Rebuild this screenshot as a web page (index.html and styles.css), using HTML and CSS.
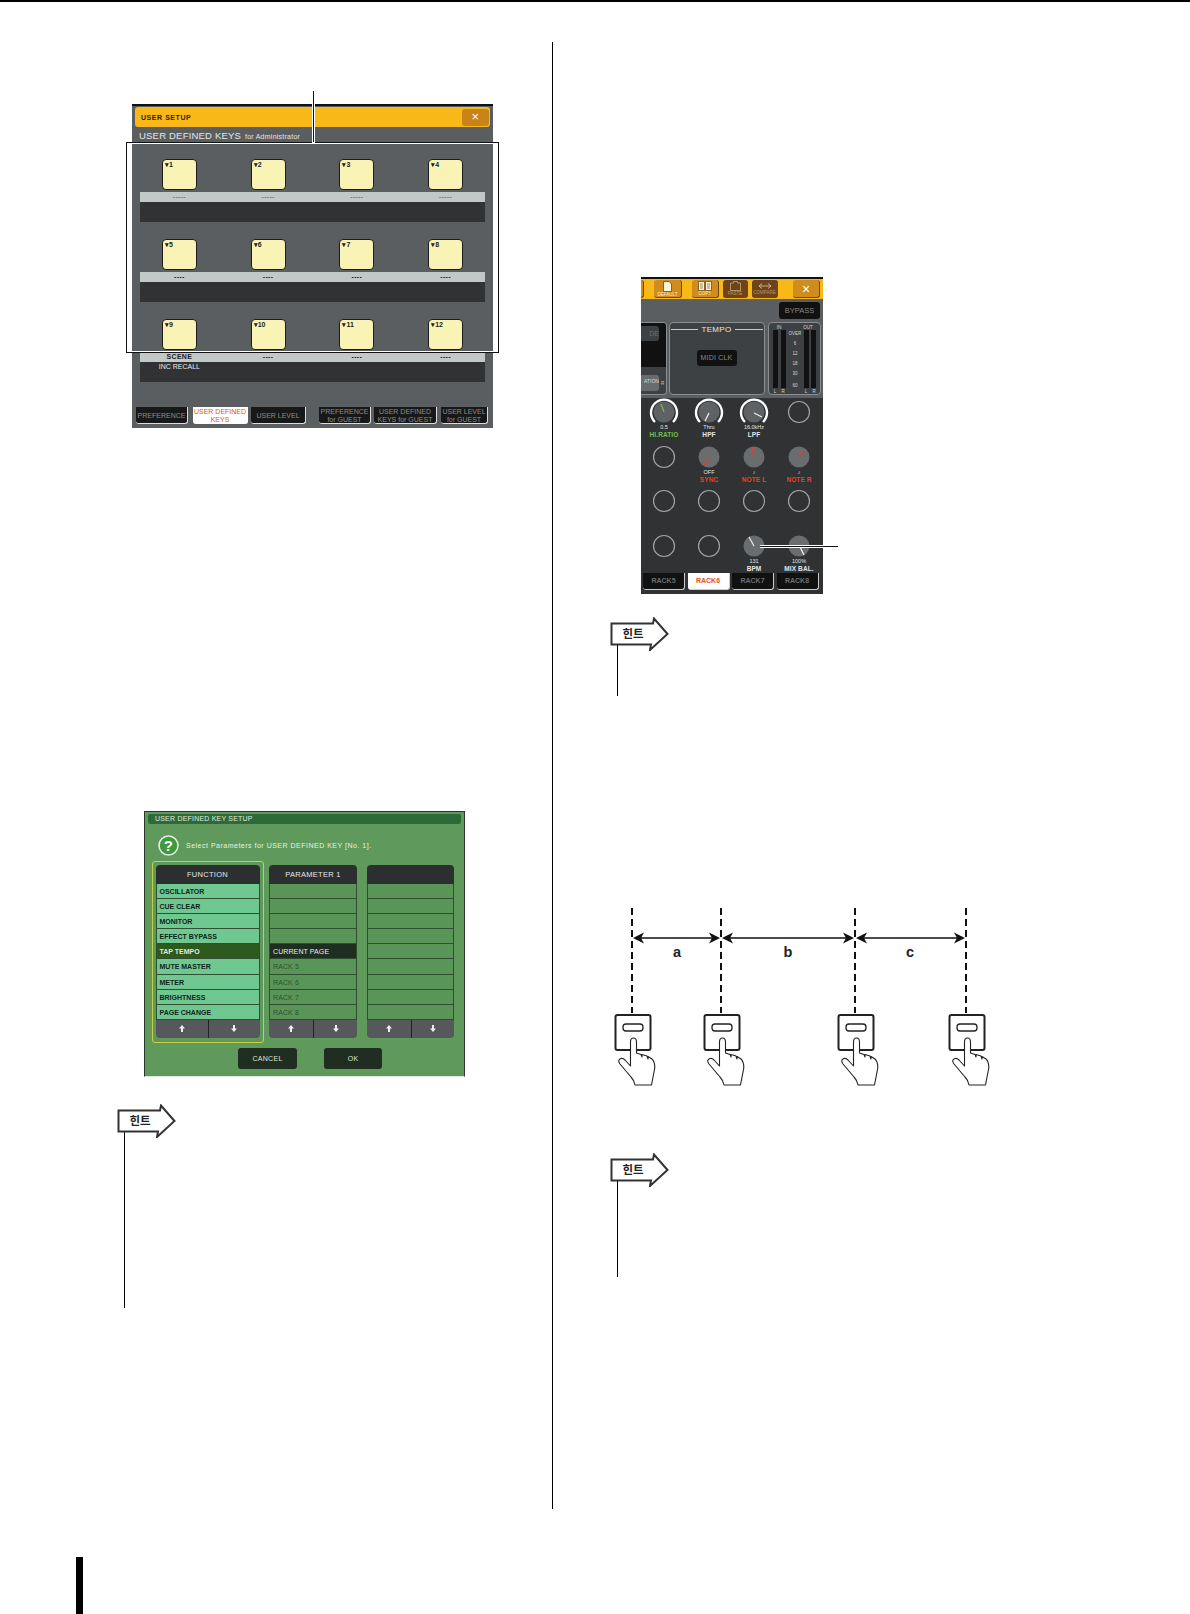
FILE: index.html
```html
<!DOCTYPE html>
<html lang="ko">
<head>
    <meta charset="UTF-8">
    <title>USER DEFINED KEYS</title>
    <link rel="stylesheet" href="styles.css">
</head>
<body>
<div class="page">
    <div class="columns">
        <div class="col-left">

            <!-- USER SETUP window -->
            <div class="setup">
                <div class="setup-title">
                    <span>USER SETUP</span>
                    <span class="setup-close">×</span>
                </div>
                <div class="setup-head">USER DEFINED KEYS <small>for Administrator</small></div>

                <div class="setup-row">
                    <div class="key-grid">
                        <div class="key">▾1</div><div class="key">▾2</div><div class="key">▾3</div><div class="key">▾4</div>
                    </div>
                    <div class="strip strip-faint">
                        <div class="strip-labels"><span>-----</span><span>-----</span><span>-----</span><span>-----</span></div>
                    </div>
                    <div class="strip-dark"></div>
                </div>
                <div class="setup-row">
                    <div class="key-grid">
                        <div class="key">▾5</div><div class="key">▾6</div><div class="key">▾7</div><div class="key">▾8</div>
                    </div>
                    <div class="strip">
                        <div class="strip-labels"><span>----</span><span>----</span><span>----</span><span>----</span></div>
                    </div>
                    <div class="strip-dark"></div>
                </div>
                <div class="setup-row">
                    <div class="key-grid">
                        <div class="key">▾9</div><div class="key">▾10</div><div class="key">▾11</div><div class="key">▾12</div>
                    </div>
                    <div class="strip">
                        <div class="strip-labels"><span>SCENE</span><span>----</span><span>----</span><span>----</span></div>
                    </div>
                    <div class="strip-dark">
                        <div class="strip-labels strip-labels-light"><span>INC RECALL</span></div>
                    </div>
                </div>

                <div class="setup-tabs">
                    <div class="tab tab-pref">PREFERENCE</div>
                    <div class="tab tab-keys tab-on">USER DEFINED<br>KEYS</div>
                    <div class="tab tab-level">USER LEVEL</div>
                    <div class="tab tab-guest1">PREFERENCE<br>for GUEST</div>
                    <div class="tab tab-guest2">USER DEFINED<br>KEYS for GUEST</div>
                    <div class="tab tab-guest3">USER LEVEL<br>for GUEST</div>
                </div>

                <div class="setup-frame"></div>
                <div class="setup-leader"></div>
            </div>

            <!-- USER DEFINED KEY SETUP window -->
            <div class="keysetup">
                <div class="keysetup-title">USER DEFINED KEY SETUP</div>
                <div class="keysetup-ask">
                    <svg class="ask-icon" width="21" height="21" viewBox="0 0 21 21">
                        <circle cx="10.5" cy="10.5" r="9.5" fill="#3f9a3f" stroke="#e4efe0" stroke-width="1.6"/>
                        <text x="10.5" y="16" text-anchor="middle" class="ask-mark">?</text>
                    </svg>
                    <span>Select Parameters for USER DEFINED KEY [No. 1].</span>
                </div>
                <div class="lists">
                    <div class="list-focus">
                        <div class="list list-fn">
                            <div class="list-head">FUNCTION</div>
                            <div class="list-row">OSCILLATOR</div>
                            <div class="list-row">CUE CLEAR</div>
                            <div class="list-row">MONITOR</div>
                            <div class="list-row">EFFECT BYPASS</div>
                            <div class="list-row list-row-on">TAP TEMPO</div>
                            <div class="list-row">MUTE MASTER</div>
                            <div class="list-row">METER</div>
                            <div class="list-row">BRIGHTNESS</div>
                            <div class="list-row">PAGE CHANGE</div>
                            <div class="list-arrows">
                                <div><svg width="6" height="7" viewBox="0 0 6 7"><path d="M3 0L6 3.5H4V7H2V3.5H0Z"/></svg></div>
                                <div><svg width="6" height="7" viewBox="0 0 6 7"><path d="M3 7L6 3.5H4V0H2V3.5H0Z"/></svg></div>
                            </div>
                        </div>
                    </div>
                    <div class="list list-param">
                        <div class="list-head">PARAMETER 1</div>
                        <div class="list-row"></div>
                        <div class="list-row"></div>
                        <div class="list-row"></div>
                        <div class="list-row"></div>
                        <div class="list-row list-row-cur">CURRENT PAGE</div>
                        <div class="list-row">RACK 5</div>
                        <div class="list-row">RACK 6</div>
                        <div class="list-row">RACK 7</div>
                        <div class="list-row">RACK 8</div>
                        <div class="list-arrows">
                            <div><svg width="6" height="7" viewBox="0 0 6 7"><path d="M3 0L6 3.5H4V7H2V3.5H0Z"/></svg></div>
                            <div><svg width="6" height="7" viewBox="0 0 6 7"><path d="M3 7L6 3.5H4V0H2V3.5H0Z"/></svg></div>
                        </div>
                    </div>
                    <div class="list list-empty">
                        <div class="list-head"></div>
                        <div class="list-row"></div>
                        <div class="list-row"></div>
                        <div class="list-row"></div>
                        <div class="list-row"></div>
                        <div class="list-row"></div>
                        <div class="list-row"></div>
                        <div class="list-row"></div>
                        <div class="list-row"></div>
                        <div class="list-row"></div>
                        <div class="list-arrows">
                            <div><svg width="6" height="7" viewBox="0 0 6 7"><path d="M3 0L6 3.5H4V7H2V3.5H0Z"/></svg></div>
                            <div><svg width="6" height="7" viewBox="0 0 6 7"><path d="M3 7L6 3.5H4V0H2V3.5H0Z"/></svg></div>
                        </div>
                    </div>
                </div>
                <div class="keysetup-btns">
                    <div class="dlg-btn dlg-cancel">CANCEL</div>
                    <div class="dlg-btn dlg-ok">OK</div>
                </div>
            </div>

            <div class="hint hint-a">
                <svg class="hint-arrow" width="60" height="34" viewBox="0 0 60 34">
                    <path d="M1.5 6.5H43L44 1.5L57.5 17L40 33L41 27.5H1.5Z" fill="#fff" stroke="#333" stroke-width="2"/>
                    <text x="23" y="21" text-anchor="middle" class="hint-text">힌트</text>
                </svg>
                <div class="hint-line hint-line-a"></div>
            </div>
        </div>

        <div class="col-right">

            <!-- rack window -->
            <div class="rack">
                <div class="rack-bar">
                    <div class="bar-btn bar-stub"></div>
                    <div class="bar-btn bar-default">
                        <svg width="9" height="11" viewBox="0 0 9 11"><path d="M.5.5H6L8.5 3V10.5H.5Z" fill="#fff4d8" stroke="#5c3a08" stroke-width=".7"/></svg>
                        <span>DEFAULT</span>
                    </div>
                    <div class="bar-btn bar-copy">
                        <svg width="14" height="10" viewBox="0 0 14 10"><path d="M.5.5H6.5V9.5H.5ZM7.5.5H13.5V9.5H7.5Z" fill="#fff4d8" stroke="#5c3a08" stroke-width=".7"/><path d="M2 3H5M2 5H5M2 7H5M9 3H12M9 5H12M9 7H12" stroke="#5c3a08" stroke-width=".6"/></svg>
                        <span>COPY</span>
                    </div>
                    <div class="bar-btn bar-paste bar-off">
                        <svg width="11" height="10" viewBox="0 0 11 10"><path d="M.5 2H3.5V.5H7.5V2H10.5V9.5H.5Z" fill="none" stroke="#c9a878" stroke-width=".8"/></svg>
                        <span>PASTE</span>
                    </div>
                    <div class="bar-btn bar-compare bar-off">
                        <svg width="14" height="8" viewBox="0 0 14 8"><path d="M1 4H13M1 4L4 1.5M1 4L4 6.5M13 4L10 1.5M13 4L10 6.5" fill="none" stroke="#e0c8a0" stroke-width=".8"/></svg>
                        <span>COMPARE</span>
                    </div>
                    <div class="bar-btn bar-close">×</div>
                </div>

                <div class="rack-top">
                    <div class="bypass-line"><div class="bypass">BYPASS</div></div>
                    <div class="rack-panels">
                        <div class="panel panel-stub">
                            <div class="stub-black"><div class="stub-btn">DE</div></div>
                            <div class="stub-lower"><div class="stub-btn2">ATION</div><span>R</span></div>
                        </div>
                        <div class="panel panel-tempo">
                            <div class="tempo-title"><span>TEMPO</span></div>
                            <div class="midi-clk">MIDI CLK</div>
                        </div>
                        <div class="panel panel-meter">
                            <svg width="51" height="71" viewBox="0 0 51 71">
                                <rect x="4" y="7" width="5" height="58" fill="#111"/>
                                <rect x="12" y="7" width="5" height="58" fill="#111"/>
                                <rect x="35" y="7" width="5" height="58" fill="#111"/>
                                <rect x="42" y="7" width="5" height="58" fill="#111"/>
                                <g class="meter-text" text-anchor="middle">
                                    <text x="10" y="6">IN</text>
                                    <text x="39" y="6">OUT</text>
                                    <text x="26" y="12">OVER</text>
                                    <text x="26" y="22">6</text>
                                    <text x="26" y="32">12</text>
                                    <text x="26" y="42">18</text>
                                    <text x="26" y="52">30</text>
                                    <text x="26" y="64">60</text>
                                    <text x="6" y="70">L</text>
                                    <text x="14" y="70">R</text>
                                    <text x="37" y="70">L</text>
                                    <text x="45" y="70">R</text>
                                </g>
                            </svg>
                        </div>
                    </div>
                </div>

                <div class="knobs">
                    <div class="knob-cell">
                        <svg class="knob" width="30" height="28" viewBox="-15 -14 30 28">
                            <path d="M-9 10A13 13 0 1 1 9 10" fill="none" stroke="#fff" stroke-width="2.4"/>
                            <circle r="10.5" fill="#5e6264"/>
                            <path d="M-3-8L0 0" stroke="#6fc04a" stroke-width="1.2"/>
                        </svg>
                        <div class="knob-val">0.5</div><div class="knob-name name-green">HI.RATIO</div>
                    </div>
                    <div class="knob-cell">
                        <svg class="knob" width="30" height="28" viewBox="-15 -14 30 28">
                            <path d="M-9 10A13 13 0 1 1 9 10" fill="none" stroke="#fff" stroke-width="2.4"/>
                            <circle r="10.5" fill="#5e6264"/>
                            <path d="M-4 9L0 1" stroke="#eee" stroke-width="1.2"/>
                        </svg>
                        <div class="knob-val">Thru</div><div class="knob-name">HPF</div>
                    </div>
                    <div class="knob-cell">
                        <svg class="knob" width="30" height="28" viewBox="-15 -14 30 28">
                            <path d="M-9 10A13 13 0 1 1 9 10" fill="none" stroke="#fff" stroke-width="2.4"/>
                            <circle r="10.5" fill="#5e6264"/>
                            <path d="M8 5L0 1" stroke="#eee" stroke-width="1.2"/>
                        </svg>
                        <div class="knob-val">16.0kHz</div><div class="knob-name">LPF</div>
                    </div>
                    <div class="knob-cell">
                        <svg class="knob" width="30" height="28" viewBox="-15 -14 30 28"><circle r="10.5" class="knob-empty"/></svg>
                    </div>

                    <div class="knob-cell">
                        <svg class="knob" width="30" height="28" viewBox="-15 -14 30 28"><circle r="10.5" class="knob-empty"/></svg>
                    </div>
                    <div class="knob-cell">
                        <svg class="knob" width="30" height="28" viewBox="-15 -14 30 28">
                            <circle r="10.5" fill="#696d6f"/><path d="M-5 8L0 0" stroke="#e84020" stroke-width="1.2"/>
                        </svg>
                        <div class="knob-val">OFF</div><div class="knob-name name-red">SYNC</div>
                    </div>
                    <div class="knob-cell">
                        <svg class="knob" width="30" height="28" viewBox="-15 -14 30 28">
                            <circle r="10.5" fill="#696d6f"/><path d="M-2-10L0 1" stroke="#e84020" stroke-width="1.2"/>
                        </svg>
                        <div class="knob-val">♪</div><div class="knob-name name-red">NOTE L</div>
                    </div>
                    <div class="knob-cell">
                        <svg class="knob" width="30" height="28" viewBox="-15 -14 30 28">
                            <circle r="10.5" fill="#696d6f"/><path d="M5-8L0 0" stroke="#e84020" stroke-width="1.2"/>
                        </svg>
                        <div class="knob-val">♪</div><div class="knob-name name-red">NOTE R</div>
                    </div>

                    <div class="knob-cell">
                        <svg class="knob" width="30" height="28" viewBox="-15 -14 30 28"><circle r="10.5" class="knob-empty"/></svg>
                    </div>
                    <div class="knob-cell">
                        <svg class="knob" width="30" height="28" viewBox="-15 -14 30 28"><circle r="10.5" class="knob-empty"/></svg>
                    </div>
                    <div class="knob-cell">
                        <svg class="knob" width="30" height="28" viewBox="-15 -14 30 28"><circle r="10.5" class="knob-empty"/></svg>
                    </div>
                    <div class="knob-cell">
                        <svg class="knob" width="30" height="28" viewBox="-15 -14 30 28"><circle r="10.5" class="knob-empty"/></svg>
                    </div>

                    <div class="knob-cell">
                        <svg class="knob" width="30" height="28" viewBox="-15 -14 30 28"><circle r="10.5" class="knob-empty"/></svg>
                    </div>
                    <div class="knob-cell">
                        <svg class="knob" width="30" height="28" viewBox="-15 -14 30 28"><circle r="10.5" class="knob-empty"/></svg>
                    </div>
                    <div class="knob-cell">
                        <svg class="knob" width="30" height="28" viewBox="-15 -14 30 28">
                            <circle r="10.5" fill="#696d6f"/><path d="M-5-9L0 0" stroke="#eee" stroke-width="1.2"/>
                        </svg>
                        <div class="knob-val">131</div><div class="knob-name">BPM</div>
                    </div>
                    <div class="knob-cell">
                        <svg class="knob" width="30" height="28" viewBox="-15 -14 30 28">
                            <circle r="10.5" fill="#696d6f"/><path d="M1 1L5 9" stroke="#eee" stroke-width="1.2"/>
                        </svg>
                        <div class="knob-val">100%</div><div class="knob-name">MIX BAL.</div>
                    </div>
                </div>

                <div class="rack-tabs">
                    <div class="rtab">RACK5</div>
                    <div class="rtab rtab-on">RACK6</div>
                    <div class="rtab">RACK7</div>
                    <div class="rtab">RACK8</div>
                </div>
                <div class="rack-leader"></div>
            </div>

            <div class="hint hint-b">
                <svg class="hint-arrow" width="60" height="34" viewBox="0 0 60 34">
                    <path d="M1.5 6.5H43L44 1.5L57.5 17L40 33L41 27.5H1.5Z" fill="#fff" stroke="#333" stroke-width="2"/>
                    <text x="23" y="21" text-anchor="middle" class="hint-text">힌트</text>
                </svg>
                <div class="hint-line hint-line-b"></div>
            </div>

            <!-- tap tempo diagram -->
            <svg class="taps" width="400" height="195" viewBox="0 0 400 195">
                <defs>
                    <g id="tap">
                        <path d="M0 8V113" stroke="#111" stroke-width="2" stroke-dasharray="7 4" fill="none"/>
                        <rect x="-16.5" y="115" width="35" height="35" rx="2" fill="#fff" stroke="#222" stroke-width="2"/>
                        <rect x="-9" y="124" width="20" height="7" rx="3" fill="#fff" stroke="#222" stroke-width="1.3"/>
                        <path d="M-1.5 166V142Q-1.5 138 1.5 138Q4.5 138 4.5 142V153L9 154.5L10 157L10 154.5L15 156L16 159L16 156.5L20 159Q23 162 22.8 168L19.5 185H3Q2 180-1 177L-12 164Q-15 160-11 158.5Q-9 158-7 160Z" fill="#fff" stroke="#222" stroke-width="1.1" stroke-linejoin="round"/>
                    </g>
                    <g id="head-l"><path d="M0 0L11-5.5L8 0L11 5.5Z" fill="#111"/></g>
                    <g id="head-r"><path d="M0 0L-11-5.5L-8 0L-11 5.5Z" fill="#111"/></g>
                </defs>
                <use href="#tap" x="32"/>
                <use href="#tap" x="121"/>
                <use href="#tap" x="255"/>
                <use href="#tap" x="366"/>
                <path d="M36 38H118M125 38H252M259 38H363" stroke="#111" stroke-width="1.6" fill="none"/>
                <use href="#head-l" x="33" y="38"/>
                <use href="#head-r" x="120" y="38"/>
                <use href="#head-l" x="122" y="38"/>
                <use href="#head-r" x="254" y="38"/>
                <use href="#head-l" x="256" y="38"/>
                <use href="#head-r" x="365" y="38"/>
                <text x="77" y="57" text-anchor="middle" class="taps-label">a</text>
                <text x="188" y="57" text-anchor="middle" class="taps-label">b</text>
                <text x="310" y="57" text-anchor="middle" class="taps-label">c</text>
            </svg>

            <div class="hint hint-c">
                <svg class="hint-arrow" width="60" height="34" viewBox="0 0 60 34">
                    <path d="M1.5 6.5H43L44 1.5L57.5 17L40 33L41 27.5H1.5Z" fill="#fff" stroke="#333" stroke-width="2"/>
                    <text x="23" y="21" text-anchor="middle" class="hint-text">힌트</text>
                </svg>
                <div class="hint-line hint-line-c"></div>
            </div>
        </div>
    </div>
    <div class="thumb-bar"></div>
</div>
</body>
</html>
```

FILE: styles.css
```css
html, body {
    margin: 0;
    padding: 0;
    background: #fff;
}
.page {
    width: 1190px;
    height: 1614px;
    overflow: hidden;
    border-top: 2px solid #000;
    box-sizing: border-box;
    padding-top: 40px;
    font-family: "Liberation Sans", Arial, sans-serif;
}
.columns {
    display: flex;
    height: 1467px;
}
.col-left {
    width: 552px;
    border-right: 1px solid #000;
    flex: none;
}
.col-right {
    flex: 1;
}
.thumb-bar {
    width: 7px;
    height: 57px;
    margin: 48px 0 0 76px;
    background: #000;
}

/* USER SETUP window */
.setup {
    position: relative;
    width: 361px;
    height: 324px;
    box-sizing: border-box;
    margin: 62px 0 0 132px;
    border-top: 2px solid #111;
    background: #5a5e60;
    padding-top: 1px;
}
.setup-title {
    display: flex;
    align-items: center;
    justify-content: space-between;
    height: 20px;
    margin: 0 3px;
    padding: 0 1px 0 6px;
    background: #f8b818;
    border-radius: 3px;
    color: #2a2008;
    font-size: 7px;
    font-weight: bold;
    letter-spacing: .55px;
}
.setup-close {
    width: 27px;
    height: 17px;
    line-height: 16px;
    text-align: center;
    background: #c98418;
    border-radius: 3px;
    color: #fff;
    font-size: 13px;
    font-weight: normal;
}
.setup-head {
    height: 15px;
    padding-left: 7px;
    margin-bottom: 17px;
    color: #e4e6e6;
    font-size: 9.5px;
    line-height: 18px;
    letter-spacing: .2px;
    white-space: nowrap;
}
.setup-head small {
    font-size: 7px;
    letter-spacing: .25px;
    margin-left: 1px;
}
.setup-row {
    margin: 0 3px 17px;
}
.key-grid {
    display: grid;
    grid-template-columns: repeat(4, 88.75px);
    justify-items: center;
}
.key {
    width: 35px;
    height: 31px;
    box-sizing: border-box;
    padding: 1px 0 0 2px;
    background: #f9f3b6;
    border: 1.5px solid #1c1c1c;
    border-radius: 4px;
    color: #222;
    font-size: 7px;
    font-weight: bold;
    line-height: 8px;
}
.strip {
    height: 10px;
    margin: 2px 5px 0;
    background: #c2c8c8;
    color: #222;
}
.strip-faint {
    color: #777;
}
.strip-labels {
    display: grid;
    grid-template-columns: repeat(4, 88.75px);
    justify-items: center;
    margin-left: -5px;
    font-size: 7px;
    font-weight: bold;
    line-height: 10px;
    letter-spacing: .3px;
}
.strip-labels-light {
    color: #e8e8e8;
    font-weight: normal;
    letter-spacing: 0;
    white-space: nowrap;
}
.strip-dark {
    height: 20px;
    margin: 0 5px;
    background: #303234;
}
.setup-tabs {
    display: flex;
    height: 17px;
    margin: 25px 0 0 4px;
}
.tab {
    box-sizing: border-box;
    height: 17px;
    padding-top: 1px;
    background: #181818;
    border-right: 1px solid #ddd;
    border-bottom: 1px solid #ddd;
    border-radius: 0 0 3px 3px;
    color: #8a8e90;
    font-size: 7px;
    line-height: 7.5px;
    text-align: center;
    white-space: nowrap;
    overflow: hidden;
}
.tab-pref, .tab-level {
    line-height: 15px;
}
.tab-pref { width: 52px; }
.tab-keys { width: 55px; margin-left: 5px; }
.tab-level { width: 55px; margin-left: 3px; }
.tab-guest1 { width: 52px; margin-left: 13px; }
.tab-guest2 { width: 63px; margin-left: 3px; }
.tab-guest3 { width: 47px; margin-left: 4px; }
.tab-on {
    background: #fff;
    border-color: #fff;
    color: #e85020;
}
.setup-frame {
    position: absolute;
    left: -6px;
    top: 36px;
    width: 373px;
    height: 211px;
    box-sizing: border-box;
    border: 1px solid #111;
    box-shadow: inset 0 0 0 1px #fff;
}
.setup-leader {
    position: absolute;
    left: 181px;
    top: -15px;
    width: 1px;
    height: 51px;
    background: #111;
    box-shadow: 0 0 0 1px #fff;
}

/* USER DEFINED KEY SETUP window */
.keysetup {
    width: 321px;
    height: 266px;
    box-sizing: border-box;
    margin: 383px 0 0 144px;
    padding: 2px 3px 0;
    background: #5f9a5c;
    border: 1px solid #2a3a2a;
    border-bottom-color: #dfe8dc;
}
.keysetup-title {
    height: 10px;
    padding-left: 7px;
    background: #2d6a3a;
    border-radius: 2px;
    color: #e0e8dc;
    font-size: 7px;
    line-height: 10px;
    letter-spacing: .2px;
}
.keysetup-ask {
    display: flex;
    align-items: center;
    height: 21px;
    margin: 11px 0 5px 10px;
    color: #e8f0e0;
    font-size: 7px;
    letter-spacing: .5px;
}
.ask-icon {
    margin-right: 7px;
}
.ask-mark {
    fill: #fff;
    font-size: 15px;
    font-weight: bold;
}
.lists {
    display: flex;
    align-items: flex-start;
    margin-left: 4px;
}
.list-focus {
    width: 112px;
    height: 182px;
    box-sizing: border-box;
    padding: 3px 2.5px;
    border: 1.5px solid #c8d040;
    border-radius: 3px;
}
.list {
    border-radius: 4px;
    overflow: hidden;
}
.list-fn { width: 104px; }
.list-param { width: 88px; margin: 4px 0 0 5px; }
.list-empty { width: 87px; margin: 4px 0 0 10px; }
.list-head {
    height: 19px;
    background: #2c2f30;
    color: #e4e6e6;
    font-size: 7.5px;
    line-height: 19px;
    letter-spacing: .3px;
    text-align: center;
}
.list-row {
    height: 15.1px;
    box-sizing: border-box;
    padding-left: 3px;
    border-bottom: 1px solid #2f4f30;
    border-left: 1px solid #2f4f30;
    border-right: 1px solid #2f4f30;
    font-size: 7px;
    line-height: 16px;
    letter-spacing: .1px;
    white-space: nowrap;
}
.list-fn .list-row {
    background: #6ec890;
    color: #10241a;
    font-weight: bold;
    letter-spacing: 0;
}
.list-fn .list-row-on {
    background: #2f5a1e;
    color: #dfe8d8;
}
.list-param .list-row, .list-empty .list-row {
    background: #5a9558;
    color: #2f4f30;
}
.list-param .list-row-cur {
    background: #1f2e20;
    color: #e8ece4;
}
.list-arrows {
    display: grid;
    grid-template-columns: 1fr 1fr;
    height: 18px;
    background: #55595b;
}
.list-arrows div {
    display: flex;
    align-items: center;
    justify-content: center;
}
.list-arrows div + div {
    border-left: 1px solid #222;
}
.list-arrows svg {
    fill: #eee;
}
.keysetup-btns {
    display: flex;
    margin: 5px 0 0 90px;
}
.dlg-btn {
    height: 21px;
    background: #1f2e20;
    border-radius: 3px;
    color: #dfe4dc;
    font-size: 7px;
    line-height: 21px;
    letter-spacing: .3px;
    text-align: center;
}
.dlg-cancel { width: 59px; }
.dlg-ok { width: 58px; margin-left: 27px; }

/* hint marker */
.hint-arrow {
    display: block;
}
.hint-text {
    fill: #222;
    font-family: "Noto Sans CJK KR", sans-serif;
    font-size: 11.5px;
    font-weight: bold;
}
.hint-line {
    width: 1px;
    margin: -7px 0 0 7px;
    background: #000;
}
.hint-a { margin: 27px 0 0 117px; }
.hint-b { margin: 23px 0 0 57px; }
.hint-c { margin: 58px 0 0 57px; }
.hint-line-a { height: 177px; }
.hint-line-b { height: 52px; }
.hint-line-c { height: 97px; }

/* rack window */
.rack {
    position: relative;
    width: 182px;
    height: 317px;
    box-sizing: border-box;
    margin: 235px 0 0 88px;
    border-top: 2px solid #111;
    background: #303234;
}
.rack-bar {
    display: flex;
    align-items: center;
    height: 20px;
    background: #f8b818;
}
.bar-btn {
    display: flex;
    flex-direction: column;
    align-items: center;
    justify-content: center;
    box-sizing: border-box;
    height: 18px;
    background: #d08c1c;
    border-right: 1px solid #6a4a10;
    border-bottom: 1px solid #6a4a10;
    border-radius: 3px;
    color: #fff2d0;
    font-size: 4.5px;
    line-height: 5px;
    flex: none;
}
.bar-off {
    background: #6c431a;
    color: #b89870;
}
.bar-stub { width: 3px; border-radius: 0 3px 3px 0; }
.bar-default { width: 28px; margin-left: 10px; }
.bar-copy { width: 27px; margin-left: 10px; }
.bar-paste { width: 25px; margin-left: 4px; }
.bar-compare { width: 26px; margin-left: 4px; }
.bar-close {
    width: 27px;
    margin-left: 15px;
    color: #fff;
    font-size: 14px;
    line-height: 14px;
}
.rack-top {
    height: 99px;
    box-sizing: border-box;
    padding-top: 3px;
    background: #5a5e60;
}
.bypass-line {
    display: flex;
    justify-content: flex-end;
    padding-right: 3px;
}
.bypass {
    width: 41px;
    height: 17px;
    background: #111;
    border-radius: 3px;
    color: #85898b;
    font-size: 7.5px;
    line-height: 17px;
    text-align: center;
}
.rack-panels {
    display: flex;
    margin-top: 3px;
    height: 73px;
}
.panel {
    box-sizing: border-box;
    border: 1.5px solid #8a8e90;
    border-radius: 4px;
    background: #3e4143;
}
.panel-stub {
    width: 26px;
    border-left: 0;
    border-radius: 0 4px 4px 0;
    overflow: hidden;
}
.stub-black {
    height: 44px;
    padding-top: 3px;
    box-sizing: border-box;
    background: #111;
}
.stub-btn {
    width: 18px;
    height: 15px;
    background: #3e4143;
    border-radius: 0 3px 3px 0;
    color: #6a6e70;
    font-size: 7px;
    line-height: 15px;
    text-align: right;
    overflow: hidden;
}
.stub-lower {
    display: flex;
    align-items: center;
    margin-top: 8px;
    color: #ccc;
    font-size: 4.5px;
}
.stub-btn2 {
    width: 18px;
    height: 16px;
    margin-right: 2px;
    background: #686c6e;
    border-radius: 0 3px 3px 0;
    color: #ddd;
    font-size: 5px;
    line-height: 12px;
    text-align: right;
    overflow: hidden;
}
.panel-tempo {
    width: 96px;
    margin-left: 1.5px;
}
.tempo-title {
    display: flex;
    align-items: center;
    gap: 4px;
    margin: 2px 1px 0;
    color: #e4e6e6;
    font-size: 8px;
    line-height: 9px;
    letter-spacing: .3px;
}
.tempo-title::before, .tempo-title::after {
    content: "";
    flex: 1;
    height: 1px;
    background: #c4c8c8;
}
.midi-clk {
    width: 40px;
    height: 16px;
    margin: 16px 0 0 27px;
    background: #111;
    border-radius: 3px;
    color: #85898b;
    font-size: 7px;
    line-height: 16px;
    letter-spacing: .2px;
    text-align: center;
}
.panel-meter {
    width: 53px;
    margin-left: 3px;
}
.panel-meter svg {
    display: block;
}
.meter-text text {
    fill: #d4d6d6;
    font-size: 4.5px;
}
.knobs {
    display: grid;
    grid-template-columns: repeat(4, 45px);
    grid-auto-rows: 44.5px;
    height: 175px;
    padding-left: .5px;
}
.knob-cell {
    display: flex;
    flex-direction: column;
    align-items: center;
    color: #e4e6e6;
}
.knob {
    display: block;
    overflow: visible;
    margin-bottom: -2px;
}
.knob-empty {
    fill: none;
    stroke: #a0a4a6;
    stroke-width: 1.2;
}
.knob-val {
    height: 6px;
    font-size: 5.5px;
    line-height: 6px;
}
.knob-name {
    height: 8px;
    font-size: 6.5px;
    font-weight: bold;
    line-height: 9px;
    letter-spacing: .1px;
    white-space: nowrap;
}
.name-green { color: #6fc04a; }
.name-red { color: #e84020; }
.rack-tabs {
    display: flex;
    gap: 2.5px;
    height: 17px;
    padding-left: 2px;
}
.rtab {
    box-sizing: border-box;
    width: 42px;
    background: #111;
    border-right: 1px solid #ccc;
    border-bottom: 1px solid #ccc;
    border-radius: 0 0 3px 3px;
    color: #6a6e70;
    font-size: 7px;
    font-weight: bold;
    line-height: 16px;
    text-align: center;
}
.rtab-on {
    background: #fff;
    color: #e85020;
}
.rack-leader {
    position: absolute;
    left: 119px;
    top: 267px;
    width: 78px;
    height: 1px;
    background: #111;
    box-shadow: 0 -1px 0 #fff, 0 1px 0 #fff;
}

/* tap tempo diagram */
.taps {
    display: block;
    margin: 204px 0 0 47px;
}
.taps-label {
    fill: #222;
    font-size: 14.5px;
    font-weight: bold;
}
```
